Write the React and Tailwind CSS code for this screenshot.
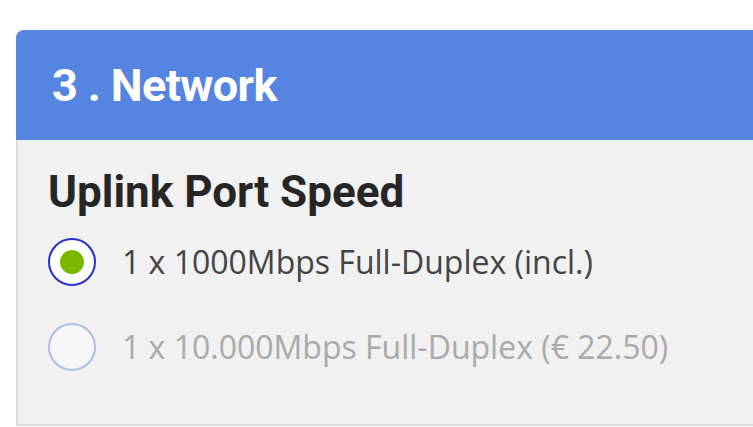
import React from 'react'

const options = [
    { label: '1 x 1000Mbps Full-Duplex (incl.)', checked: true, disabled: false },
    { label: '1 x 10.000Mbps Full-Duplex (€ 22.50)', checked: false, disabled: true },
]

function Radio({ checked, disabled }) {
    if (checked) {
        return (
            <span className="flex items-center justify-center w-[48px] h-[48px] shrink-0 rounded-full border-2 border-[#2432c8] bg-white">
                <span className="w-[24px] h-[24px] rounded-full bg-[#7ab800]" />
            </span>
        )
    }
    return (
        <span
            className={
                disabled
                    ? 'w-[48px] h-[48px] shrink-0 rounded-full border-2 border-[#a9bfe6] bg-[#f7f7f7]'
                    : 'w-[48px] h-[48px] shrink-0 rounded-full border-2 border-[#2432c8] bg-white'
            }
        />
    )
}

function App() {
    return (
        <div className="w-[753px] h-[427px] bg-white overflow-hidden pt-[30px] pl-[16px]">
            <div className="w-[760px] rounded-tl-[8px] overflow-hidden">
                {/* Header */}
                <div className="h-[110px] bg-[#5585e0] flex items-center pl-[36px] pt-[2px]">
                    <h2 className="text-white font-bold text-[45px] tracking-[-0.6px] font-['Roboto',sans-serif]">
                        3 . Network
                    </h2>
                </div>

                {/* Body */}
                <div className="h-[286px] bg-[#f1f1f1] border-l-2 border-b-2 border-[#dddddd] pl-[30px] pt-[26px]">
                    <h3 className="text-[#262626] font-bold text-[44px] leading-[52px] font-['Roboto',sans-serif]">
                        Uplink Port Speed
                    </h3>
                    <div className="flex flex-col gap-[37px] mt-[20px]">
                        {options.map((o) => (
                            <label key={o.label} className="flex items-center gap-[26px] h-[48px]">
                                <Radio checked={o.checked} disabled={o.disabled} />
                                <span
                                    className={
                                        o.disabled
                                            ? "text-[32px] text-[#aaaaaa] font-['Open_Sans',sans-serif]"
                                            : "text-[32px] text-[#444444] font-['Open_Sans',sans-serif]"
                                    }
                                >
                                    {o.label}
                                </span>
                            </label>
                        ))}
                    </div>
                </div>
            </div>
        </div>
    )
}

export default App
